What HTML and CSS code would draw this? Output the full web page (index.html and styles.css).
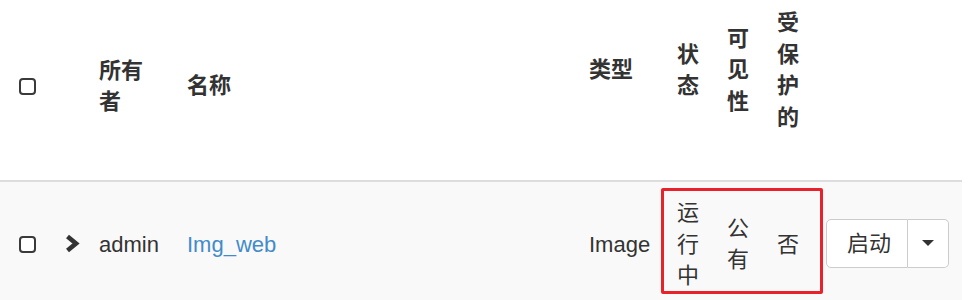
FILE: index.html
```html
<!DOCTYPE html>
<html lang="zh-CN">
<head>
<meta charset="utf-8">
<link rel="stylesheet" href="styles.css">
</head>
<body>
<div class="wrap">
<table class="grid">
  <colgroup>
    <col class="c-check">
    <col class="c-expand">
    <col class="c-owner">
    <col class="c-name">
    <col class="c-type">
    <col class="c-narrow">
    <col class="c-narrow">
    <col class="c-narrow">
    <col class="c-actions">
  </colgroup>
  <thead>
    <tr>
      <th class="low"><span class="cb"></span></th>
      <th class="low"></th>
      <th class="low">所有者</th>
      <th class="low">名称</th>
      <th class="high">类型</th>
      <th class="high">状态</th>
      <th class="high">可见性</th>
      <th class="high">受保护的</th>
      <th class="high"></th>
    </tr>
  </thead>
  <tbody>
    <tr>
      <td><span class="cb"></span></td>
      <td><svg class="chev" width="15" height="19" viewBox="0 0 15 19"><polyline points="2.5,2.5 11,9.5 2.5,16.5" fill="none" stroke="#333" stroke-width="4.6" stroke-linecap="butt" stroke-linejoin="miter"/></svg></td>
      <td>admin</td>
      <td><a class="link" href="#">Img_web</a></td>
      <td>Image</td>
      <td>运行中</td>
      <td>公有</td>
      <td>否</td>
      <td class="actions">
        <div class="btn-group">
          <span class="btn">启动</span>
          <span class="btn caret-btn"><span class="caret"></span></span>
        </div>
      </td>
    </tr>
  </tbody>
</table>
<div class="highlight"></div>
</div>
</body>
</html>
```

FILE: styles.css
```css
html, body {
  margin: 0;
  padding: 0;
  background: #fff;
}
body {
  font-family: "Liberation Sans", Arial, "Noto Sans CJK SC", sans-serif;
  font-size: 22px;
  line-height: 31.5px;
  color: #333;
}
.wrap {
  position: relative;
  width: 970px;
}
.grid {
  border-collapse: collapse;
  table-layout: fixed;
  width: 962px;
}
.c-check { width: 51px; }
.c-expand { width: 34px; }
.c-owner { width: 88px; }
.c-name { width: 402px; }
.c-type { width: 88px; }
.c-narrow { width: 50px; }
.c-actions { width: 149px; }

th {
  font-weight: bold;
  text-align: left;
  vertical-align: middle;
  padding: 7px 14px 47px;
  border-bottom: 2px solid #ddd;
  height: 126px;
}
th.low {
  padding-top: 15px;
  padding-bottom: 23px;
  height: 142px;
}
th.high {
  padding-top: 7px;
  padding-bottom: 47px;
}
tbody tr {
  background: #f9f9f9;
}
td {
  vertical-align: middle;
  padding: 15px 14px;
  white-space: normal;
}
td.actions {
  padding-left: 13px;
}
th:first-child, td:first-child {
  padding-left: 19px;
  padding-right: 0;
}
.cb {
  display: inline-block;
  box-sizing: border-box;
  width: 17px;
  height: 17px;
  border: 2px solid #3a3a3a;
  border-radius: 4px;
  background: #fff;
  vertical-align: middle;
  position: relative;
  top: -1px;
}
.chev {
  display: inline-block;
  vertical-align: middle;
  position: relative;
  top: -2px;
}
.link {
  color: #428bca;
  text-decoration: none;
}
.btn-group {
  display: inline-flex;
  vertical-align: middle;
  position: relative;
  top: -1px;
}
.btn {
  display: inline-block;
  background: #fff;
  border: 1px solid #ccc;
  padding: 8px 18px 8px 20px;
  line-height: 31px;
  font-size: 22px;
  color: #333;
  border-radius: 5px 0 0 5px;
  white-space: nowrap;
  width: 42px;
  text-align: center;
}
.caret-btn {
  border-left: none;
  border-radius: 0 5px 5px 0;
  padding: 8px 14px;
  width: 12px;
  display: inline-flex;
  align-items: center;
  justify-content: center;
}
.caret {
  display: inline-block;
  width: 0;
  height: 0;
  border-left: 6px solid transparent;
  border-right: 6px solid transparent;
  border-top: 6px solid #333;
}
.highlight {
  position: absolute;
  left: 661px;
  top: 188px;
  width: 162px;
  height: 106px;
  box-sizing: border-box;
  border: 3px solid #e8212b;
  border-radius: 2px;
  pointer-events: none;
}
```
